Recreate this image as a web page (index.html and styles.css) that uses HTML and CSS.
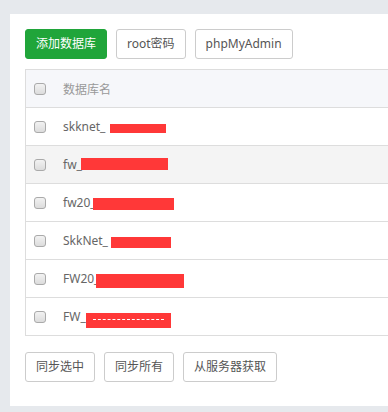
FILE: index.html
```html
<!DOCTYPE html>
<html lang="zh-CN">
<head>
    <meta charset="UTF-8">
    <meta name="viewport" content="width=device-width, initial-scale=1.0">
    <title>数据库</title>
    <link rel="stylesheet" href="styles.css">
</head>
<body>
    <div class="panel">
        <div class="toolbar">
            <button class="btn btn-green">添加数据库</button>
            <button class="btn">root密码</button>
            <button class="btn">phpMyAdmin</button>
        </div>

        <table class="db-table">
            <thead>
                <tr>
                    <th class="col-check"><input type="checkbox"></th>
                    <th>数据库名</th>
                </tr>
            </thead>
            <tbody>
                <tr>
                    <td class="col-check"><input type="checkbox"></td>
                    <td class="name">skknet_<span class="mask" style="left:47px; top:16px; width:56px; height:9px;"></span></td>
                </tr>
                <tr class="hover">
                    <td class="col-check"><input type="checkbox"></td>
                    <td class="name">fw_<span class="mask" style="left:18px; top:12px; width:87px; height:12px;"></span></td>
                </tr>
                <tr>
                    <td class="col-check"><input type="checkbox"></td>
                    <td class="name">fw20_<span class="mask" style="left:30px; top:14px; width:81px; height:12px;"></span></td>
                </tr>
                <tr>
                    <td class="col-check"><input type="checkbox"></td>
                    <td class="name">SkkNet_<span class="mask" style="left:48px; top:15px; width:60px; height:11px;"></span></td>
                </tr>
                <tr>
                    <td class="col-check"><input type="checkbox"></td>
                    <td class="name">FW20_<span class="mask" style="left:33px; top:14px; width:88px; height:14px;"></span></td>
                </tr>
                <tr>
                    <td class="col-check"><input type="checkbox"></td>
                    <td class="name">FW_<span class="mask mask-line" style="left:23px; top:15px; width:85px; height:15px;"></span></td>
                </tr>
            </tbody>
        </table>

        <div class="toolbar bottom">
            <button class="btn">同步选中</button>
            <button class="btn">同步所有</button>
            <button class="btn">从服务器获取</button>
        </div>
    </div>
</body>
</html>
```

FILE: styles.css
```css
body {
    margin: 0;
    background-color: #e6e9ed;
    font-family: "Noto Sans", "Noto Sans CJK SC", sans-serif;
    font-size: 12px;
    color: #666;
}
.panel {
    margin: 14px 0 6px 10px;
    height: 362px;
    padding: 15px 0 15px 15px;
    background-color: #fff;
}
.toolbar {
    display: flex;
    gap: 9px;
}
.toolbar.bottom {
    margin-top: 16px;
}
.btn {
    height: 30px;
    padding: 0 10px;
    border: 1px solid #ccc;
    border-radius: 3px;
    background-color: #fff;
    color: #555;
    font-family: inherit;
    font-size: 12px;
    line-height: 28px;
    cursor: pointer;
}
.btn-green {
    background-color: #20a53a;
    border-color: #20a53a;
    color: #fff;
}
.db-table {
    width: 100%;
    margin-top: 10px;
    border-collapse: collapse;
    border: 1px solid #ddd;
    border-right: none;
}
.db-table th,
.db-table td {
    height: 37px;
    padding: 0;
    border-bottom: 1px solid #ddd;
    text-align: left;
    font-weight: normal;
    vertical-align: middle;
}
.db-table thead tr {
    background-color: #f6f7fa;
}
.db-table th {
    color: #999;
}
.db-table tr.hover {
    background-color: #f4f4f4;
}
.col-check {
    width: 29px;
    padding-left: 8px !important;
}
.col-check input {
    appearance: none;
    display: block;
    width: 12px;
    height: 12px;
    margin: 0;
    border: 1px solid #aaa;
    border-radius: 3px;
    background: linear-gradient(#f2f2f2, #dcdcdc);
}
.name {
    position: relative;
}
.mask {
    position: absolute;
    background-color: #ff3838;
}
.mask-line::after {
    content: "";
    position: absolute;
    left: 7px;
    right: 7px;
    top: 6px;
    border-top: 1px dashed #fff;
}
```
